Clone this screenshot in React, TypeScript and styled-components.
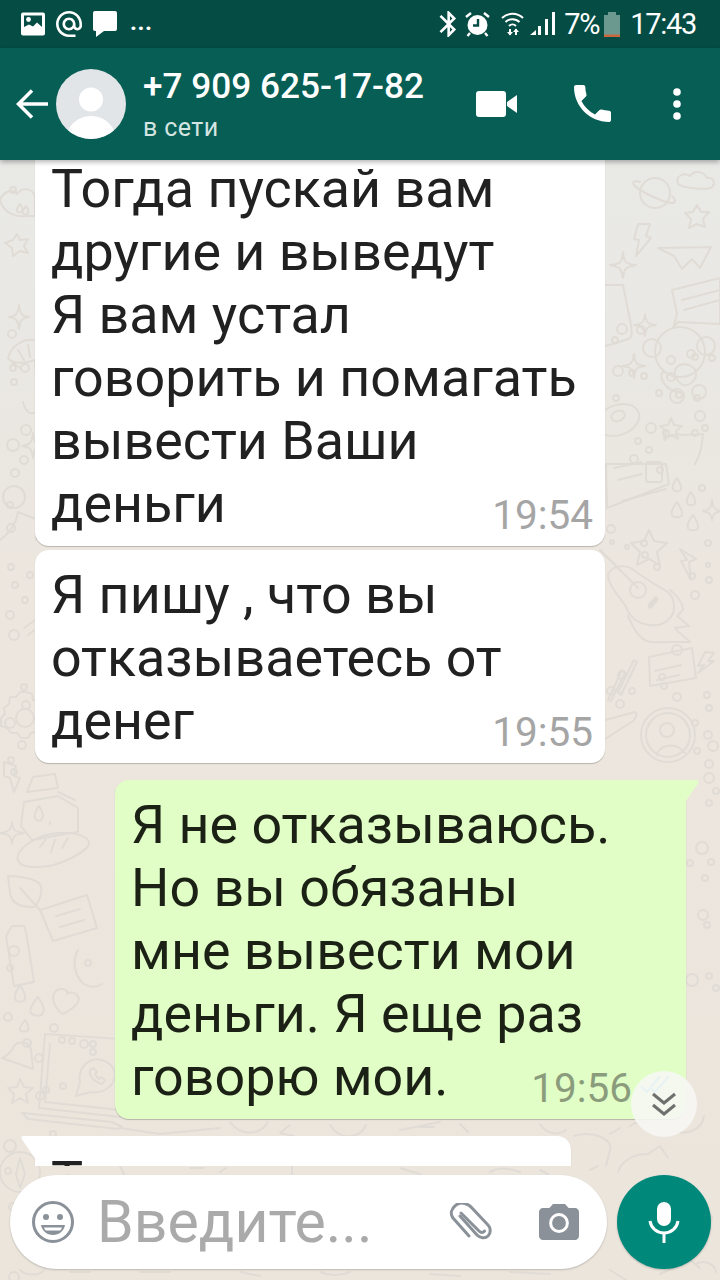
import styled, { createGlobalStyle } from "styled-components";

const GlobalStyle = createGlobalStyle`
    html, body {
        margin: 0;
        padding: 0;
        background: #ece5dd;
    }
    * {
        box-sizing: border-box;
    }
`;

const Page = styled.div`
    width: 720px;
    height: 1280px;
    overflow: hidden;
    display: flex;
    flex-direction: column;
    font-family: Roboto, "Liberation Sans", sans-serif;
`;

const StatusBar = styled.div`
    height: 48px;
    flex: none;
    display: flex;
    align-items: center;
    padding: 0 24px 0 21px;
    background: #054d44;
    color: #fff;
`;

const StatusLeft = styled.div`
    display: flex;
    align-items: center;
    gap: 11px;
    flex: 1;
`;

const StatusDots = styled.span`
    font-size: 24px;
    line-height: 26px;
    margin: 0 0 0 2px;
    letter-spacing: 0.5px;
    font-weight: 700;
    align-self: flex-end;
    padding-bottom: 4px;
`;

const StatusRight = styled.div`
    display: flex;
    align-items: center;
`;

const StatusText = styled.span<{ $gap: number }>`
    font-size: 29px;
    line-height: 48px;
    margin-left: ${(p) => p.$gap}px;
    letter-spacing: -1.3px;
`;

const Header = styled.header`
    position: relative;
    z-index: 2;
    height: 112px;
    flex: none;
    display: flex;
    align-items: center;
    padding-left: 16px;
    background: #075e54;
    color: #fff;
    box-shadow: 0 2px 5px rgba(0, 0, 0, 0.3);
`;

const Avatar = styled.div`
    width: 70px;
    height: 70px;
    margin-left: 8px;
    flex: none;
    border-radius: 50%;
    overflow: hidden;
`;

const Contact = styled.div`
    flex: 1;
    margin-left: 17px;
`;

const ContactName = styled.div`
    font-size: 35.2px;
    line-height: 42px;
    font-weight: 500;
    white-space: nowrap;
`;

const ContactStatus = styled.div`
    font-size: 25px;
    line-height: 32px;
    margin-top: 5px;
    color: #d4e5e2;
    letter-spacing: 0.4px;
`;

const HeaderActions = styled.div`
    display: flex;
    align-items: center;
    padding-right: 39px;
`;

const Chat = styled.main`
    position: relative;
    flex: 1;
    display: flex;
    flex-direction: column;
    background: linear-gradient(#e9e9e6 0, #e9e8e4 180px, #ece6de 420px, #ebe5dc 100%);
`;

const DoodleLayer = styled.svg`
    position: absolute;
    left: 0;
    top: 0;
    width: 720px;
    height: 1120px;
    fill: none;
    stroke: #e0dcd5;
    stroke-width: 2;
    stroke-linejoin: round;
    stroke-linecap: round;
`;

const MessageList = styled.div`
    position: relative;
    height: 1006px;
    flex: none;
    overflow: hidden;
    display: flex;
    flex-direction: column;
`;

const Bubble = styled.div<{ $out?: boolean; $tail?: boolean; $gap?: number }>`
    position: relative;
    flex: none;
    width: ${(p) => (p.$out ? 571 : 570)}px;
    margin-top: ${(p) => p.$gap ?? 0}px;
    margin-left: ${(p) => (p.$out ? 115 : 35)}px;
    padding: 13px 12px 11px 16px;
    background: ${(p) => (p.$out ? "#e1fec6" : "#fff")};
    color: ${(p) => (p.$out ? "#1c2116" : "#212121")};
    font-size: 53.8px;
    line-height: 63px;
    white-space: pre;
    border-radius: 14px;
    box-shadow: 0 1px 1px rgba(0, 0, 0, 0.22);
    ${(p) =>
        p.$tail &&
        (p.$out
            ? "border-top-right-radius: 0;"
            : "border-top-left-radius: 0; width: 536px;")}

    &::after {
        content: ${(p) => (p.$tail ? '""' : "none")};
        position: absolute;
        top: 0;
        width: 16px;
        height: 24px;
        background: inherit;
        ${(p) =>
            p.$out
                ? "right: -14px; clip-path: polygon(0 0, 82% 0, 92% 4%, 88% 14%, 0 100%);"
                : "left: -15px; clip-path: polygon(100% 0, 18% 0, 8% 4%, 12% 14%, 100% 100%);"}
    }
`;

const LastLine = styled.div`
    display: flex;
    justify-content: space-between;
    align-items: flex-end;
    height: 63px;
`;

const Meta = styled.div<{ $out?: boolean }>`
    display: flex;
    align-items: center;
    flex: none;
    margin-bottom: -4px;
    font-size: 40.5px;
    line-height: 48px;
    color: ${(p) => (p.$out ? "#8b9c7d" : "#a5a5a5")};
`;

const Ticks = styled.svg`
    margin: 0 4px 8px 8px;
`;

const ScrollButton = styled.div`
    position: absolute;
    left: 631px;
    top: 911px;
    width: 66px;
    height: 66px;
    display: flex;
    align-items: center;
    justify-content: center;
    border-radius: 50%;
    background: rgba(247, 247, 245, 0.88);
`;

const Composer = styled.div`
    position: relative;
    flex: 1;
    display: flex;
    align-items: flex-start;
    padding: 9px 9px 0 10px;
`;

const InputPill = styled.div`
    width: 597px;
    height: 94px;
    display: flex;
    align-items: center;
    padding: 0 28px 0 22px;
    background: #fff;
    border-radius: 47px;
    box-shadow: 0 1px 2px rgba(0, 0, 0, 0.2);
`;

const Placeholder = styled.div`
    flex: 1;
    margin-left: 23px;
    font-size: 59px;
    line-height: 94px;
    color: #aaaaaa;
    white-space: nowrap;
`;

const MicButton = styled.div`
    width: 94px;
    height: 94px;
    margin-left: 10px;
    display: flex;
    align-items: center;
    justify-content: center;
    border-radius: 50%;
    background: #00897b;
    box-shadow: 0 1px 2px rgba(0, 0, 0, 0.2);
`;

const ImageIcon = () => (
    <svg width="24" height="24" viewBox="0 0 24 24">
        <rect width="24" height="23" y="0.5" rx="2" fill="#fff" />
        <rect x="3" y="3.5" width="18" height="12" fill="#054d44" />
        <circle cx="7.5" cy="7.5" r="2.4" fill="#fff" />
        <path d="M3 19v-4l5-2.5 4 2 4-4 5 4.5v4z" fill="#fff" />
    </svg>
);

const AtIcon = () => (
    <svg width="26" height="26" viewBox="2 2 20 20" fill="#fff">
        <path d="M12 2C6.48 2 2 6.48 2 12s4.48 10 10 10h5v-2h-5c-4.34 0-8-3.66-8-8s3.66-8 8-8 8 3.66 8 8v1.43c0 .79-.71 1.57-1.5 1.57s-1.5-.78-1.5-1.57V12c0-2.76-2.24-5-5-5s-5 2.24-5 5 2.24 5 5 5c1.38 0 2.64-.56 3.54-1.47.65.89 1.77 1.47 2.96 1.47 1.97 0 3.5-1.6 3.5-3.57V12c0-5.52-4.48-10-10-10zm0 13c-1.66 0-3-1.34-3-3s1.34-3 3-3 3 1.34 3 3-1.34 3-3 3z" />
    </svg>
);

const ChatIcon = () => (
    <svg width="24" height="26" viewBox="0 0 24 26" fill="#fff">
        <path d="M2 0h20a2 2 0 0 1 2 2v16a2 2 0 0 1-2 2H11l-8 6v-6H2a2 2 0 0 1-2-2V2a2 2 0 0 1 2-2z" />
    </svg>
);

const BluetoothIcon = () => (
    <svg width="18" height="26" viewBox="5 2 13 20" fill="#fff">
        <path d="M17.71 7.71L12 2h-1v7.59L6.41 5 5 6.41 10.59 12 5 17.59 6.41 19 11 14.41V22h1l5.71-5.71-4.3-4.29 4.3-4.29zM13 5.83l1.88 1.88L13 9.59V5.83zm1.88 10.46L13 18.17v-3.76l1.88 1.88z" />
    </svg>
);

const AlarmIcon = () => (
    <svg width="25" height="25" viewBox="0 0 25 25" style={{ marginLeft: 8 }}>
        <circle cx="12.5" cy="13" r="10" fill="#fff" />
        <path d="M13 7v6.5H8" stroke="#054d44" strokeWidth="2.4" fill="none" />
        <path d="M1 5l5-4M24 5l-5-4M5 21l-2.5 3M20 21l2.5 3" stroke="#fff" strokeWidth="2.4" fill="none" />
    </svg>
);

const WifiIcon = () => (
    <svg width="23" height="24" viewBox="0 0 23 24" fill="none" stroke="#fff" strokeWidth="2" style={{ marginLeft: 11 }}>
        <path d="M1 6a15 15 0 0 1 21 0M4.5 10a10 10 0 0 1 14 0M8 14a5 5 0 0 1 7 0" />
        <path d="M9 23v-6M15 17v6" />
        <path d="M6 20l3 3.5 3-3.500zM12 20l3-3.500 3 3.500z" fill="#fff" stroke="none" />
    </svg>
);

const SignalIcon = () => (
    <svg width="25" height="24" viewBox="0 0 25 24" fill="#fff" style={{ marginLeft: 6 }}>
        <path d="M0 23l6-5v5zM8 23v-9h3v9zM15 23V7h3v16zM22 23V0h3v23z" />
    </svg>
);

const BatteryIcon = () => (
    <svg width="16" height="25" viewBox="0 0 16 25" style={{ marginLeft: 5 }}>
        <path d="M0 3h4V0h8v3h4v22H0z" fill="#6b988f" />
        <rect y="22.500" width="16" height="2.500" fill="#c8683f" />
    </svg>
);

const BackIcon = () => (
    <svg width="32" height="30" viewBox="0 0 32 30" fill="none" stroke="#fff" strokeWidth="3.500">
        <path d="M32 15H3M16 1.500L2.500 15 16 28.500" />
    </svg>
);

const AvatarIcon = () => (
    <svg width="70" height="70" viewBox="0 0 70 70">
        <rect width="70" height="70" fill="#e1e5e8" />
        <circle cx="35" cy="30.500" r="12" fill="#fff" />
        <ellipse cx="35" cy="71" rx="25" ry="24" fill="#fff" />
    </svg>
);

const VideoIcon = () => (
    <svg width="41" height="26" viewBox="0 0 41 26" fill="#fff" style={{ marginRight: 57 }}>
        <rect width="30" height="26" rx="3" />
        <path d="M31 11l10-7v18l-10-7z" />
    </svg>
);

const PhoneIcon = () => (
    <svg width="37" height="37" viewBox="3 3 18 18" fill="#fff" style={{ marginRight: 62, marginTop: -2 }}>
        <path d="M6.620 10.790c1.440 2.830 3.760 5.140 6.590 6.590l2.200-2.200c.27-.27.67-.36 1.020-.24 1.120.37 2.330.57 3.570.57.55 0 1 .45 1 1V20c0 .55-.45 1-1 1-9.390 0-17-7.610-17-17 0-.55.45-1 1-1h3.500c.55 0 1 .45 1 1 0 1.250.2 2.450.57 3.570.11.35.03.74-.25 1.020l-2.200 2.200z" />
    </svg>
);

const MoreIcon = () => (
    <svg width="8" height="32" viewBox="0 0 8 32" fill="#fff">
        <circle cx="4" cy="4" r="3.800" />
        <circle cx="4" cy="16" r="3.800" />
        <circle cx="4" cy="28" r="3.800" />
    </svg>
);

const EmojiIcon = () => (
    <svg width="42" height="42" viewBox="0 0 42 42">
        <circle cx="21" cy="21" r="19.500" fill="none" stroke="#8a9198" strokeWidth="3" />
        <circle cx="14" cy="16" r="3" fill="#8a9198" />
        <circle cx="28" cy="16" r="3" fill="#8a9198" />
        <path d="M9 24h24c-1 6-6 10-12 10S10 30 9 24z" fill="#8a9198" />
        <path d="M12 26.500h18c-.5 1.500-1 2.500-2 3H14c-1-.5-1.500-1.500-2-3z" fill="#fff" />
    </svg>
);

const ClipIcon = () => (
    <svg width="44" height="38" viewBox="0 0 44 38" fill="none" stroke="#8a9198" strokeWidth="3" strokeLinecap="round" style={{ marginRight: 46 }}>
        <path d="M11 14L28 33c3 3 8 4 11 1s3-8 0-11L23 6C20 2 12-1 7 3S1 12 4 16l16 18" transform="translate(0 -1)" />
        <path d="M12 10l18 18c2 2 4 2 5.500 0" />
    </svg>
);

const CameraIcon = () => (
    <svg width="40" height="37" viewBox="2 2 20 18.500">
        <path d="M9 2L7.170 4H4c-1.100 0-2 .9-2 2v12c0 1.100.9 2 2 2h16c1.100 0 2-.9 2-2V6c0-1.100-.9-2-2-2h-3.170L15 2H9z" fill="#8a9198" />
        <circle cx="12" cy="11.500" r="4.200" fill="#8a9198" stroke="#fff" strokeWidth="1.500" />
    </svg>
);

const MicIcon = () => (
    <svg width="32" height="41" viewBox="0 0 32 41" fill="none" stroke="#fff" strokeWidth="3">
        <rect x="9" y="0" width="14" height="24" rx="7" fill="#fff" stroke="none" />
        <path d="M2 19c1 7 7 12 14 12s13-5 14-12M16 31v10" />
    </svg>
);

const ChevronsIcon = () => (
    <svg width="26" height="24" viewBox="0 0 26 24" fill="none" stroke="#6f6f6d" strokeWidth="3">
        <path d="M2 2l11 9 11-9M2 13l11 9 11-9" />
    </svg>
);

const circles: [number, number, number][] = [
    [622, 169, 5], [641, 170, 4], [615, 180, 3], [618, 211, 5], [632, 213, 3], [644, 216, 3], [671, 217, 4], [712, 198, 3], [695, 197, 3],
    [616, 238, 3], [659, 233, 3], [679, 235, 3], [697, 238, 3], [700, 256, 5], [651, 268, 5], [666, 273, 3], [695, 273, 3], [705, 268, 3],
    [638, 281, 3], [649, 290, 3], [634, 299, 4], [660, 310, 3], [702, 328, 3], [611, 369, 4], [612, 382, 2], [644, 383, 3], [627, 387, 2],
    [645, 395, 3], [657, 407, 3], [708, 383, 3], [692, 416, 3], [709, 420, 3], [708, 405, 2], [695, 435, 4],
    [622, 515, 4], [632, 531, 3], [611, 531, 4], [620, 544, 4], [677, 490, 5], [662, 517, 3], [664, 526, 3], [677, 537, 4], [707, 535, 3], [709, 548, 3],
    [695, 563, 3], [708, 575, 4], [713, 586, 5], [697, 591, 3], [709, 604, 4], [709, 618, 5], [716, 631, 3], [709, 643, 3], [617, 642, 3], [623, 637, 3], [635, 643, 4],
    [639, 689, 3], [702, 688, 6], [678, 699, 4], [690, 703, 3], [711, 702, 3], [705, 718, 3], [626, 742, 3], [620, 755, 3], [633, 758, 3], [703, 755, 5], [644, 767, 3], [620, 771, 5],
    [707, 765, 3], [692, 820, 6], [709, 816, 3], [716, 828, 3],
    [690, 1040, 6], [703, 1063, 3], [709, 1058, 3], [681, 1034, 3], [706, 1066, 4],
    [13, 30, 3], [12, 174, 4], [13, 208, 3], [25, 208, 4], [14, 222, 3], [26, 270, 5], [13, 285, 6], [24, 300, 4], [15, 313, 4], [10, 345, 3],
    [11, 368, 4], [11, 407, 3], [30, 415, 3], [15, 425, 3], [25, 440, 3], [10, 455, 4], [14, 475, 5], [24, 527, 3], [26, 545, 4], [10, 563, 5], [22, 585, 4], [11, 600, 3], [14, 612, 3],
    [14, 791, 5], [10, 808, 3], [88, 803, 3], [8, 857, 4], [54, 868, 4], [62, 880, 3], [72, 881, 3], [84, 884, 4], [93, 884, 3], [93, 892, 3], [39, 898, 4], [40, 936, 4],
    [46, 930, 3], [63, 926, 3], [53, 974, 3], [70, 986, 3], [68, 1019, 4], [13, 1047, 4], [20, 1064, 4], [8, 1011, 3], [14, 1117, 5],
];

const Doodles = () => (
    <DoodleLayer viewBox="0 160 720 1120">
        {circles.map(([cx, cy, r], i) => (
            <circle key={i} cx={cx} cy={cy + 160} r={r} />
        ))}

        {/* planet, cloud */}
        <circle cx="655" cy="193" r="15" />
        <path d="M640 182c-6-2-8 0-6 3 5 6 30 18 38 18 4 0 4-4 0-7" />
        <path d="M678 184c-3-8 6-12 12-8 4-6 14-5 17 2 6-1 9 5 5 9-3 3-28 2-34-3z" />
        <path d="M0 200c3-8 12-12 17-6 5-7 15-6 18 2v20l-7 0c-8 1-24 0-28-16z" />
        {/* stars */}
        <path d="M697 205l4 7 8 0-6 7 2 8-8-3-8 4 2-9-6-6 8-1z" />
        <path d="M17 234l3 6 8-1-4 7 4 7-8-2-7 5-1-8-7-5 8-3z" />
        <path d="M671 418l3 7 8 1-6 5 2 8-7-4-7 4 2-8-6-5 8-1z" />
        <path d="M649 530l5 11 13 2-10 9 3 13-11-6-12 6 3-13-9-9 13-2z" />
        <path d="M12 1070l4 8 9 1-7 6 2 9-8-5-8 5 2-9-6-6 9-1z" transform="translate(8 9)" />
        {/* sparkles */}
        <path d="M623 252c1 10 2 12 13 13-10 2-12 3-13 13-2-10-3-11-13-13 11-1 12-3 13-13z" />
        <path d="M645 314c1 8 2 10 11 11-9 1-10 3-11 11-1-8-3-10-11-11 9-1 10-3 11-11z" />
        <path d="M634 354c1 9 2 11 11 12-9 1-10 3-11 12-1-9-3-11-12-12 9-1 11-3 12-12z" />
        <path d="M712 500c1 8 3 10 9 11-6 1-8 3-9 9-1-6-3-8-9-9 6-1 8-3 9-9z" />
        <path d="M19 305c1 9 3 11 10 12-7 1-9 3-10 12-1-9-3-11-10-12 7-1 9-3 10-12z" />
        <path d="M33 433c1 9 2 12 10 13-8 1-9 3-10 12-1-9-3-11-11-12 8-1 10-4 11-13z" />
        <path d="M12 822c1 8 2 10 12 11-10 1-11 3-12 11-1-8-3-10-12-11 9-1 11-3 12-11z" />
        {/* bolts */}
        <path d="M638 224l12 0-4 12 5 2-15 18 3-16-5-1z" />
        <path d="M680 549l16 10-7 3 2 18-10-19 6-1z" />
        <path d="M705 652l-7 14 6-1-6 8 16-12-6 0 6-8z" />
        <path d="M4 762l12 4-2 10 6 2-6 14-4-14-6-2z" />
        {/* paper plane, cards */}
        <path d="M658 248l53-1-11 21-8-9-10 10-8-13z" />
        <path d="M672 290l48-12v46l-42-2-5 6 4-14z" />
        <path d="M682 300l38-10M684 310l36-10" />
        <path d="M649 657l43-9 4 30-46 8z" />
        <path d="M655 671l26-6M657 680l22-5" />
        <path d="M606 464l60 0 3 20-62 24z" />
        <path d="M614 468l28-6M618 480l24-6M622 501l44-12" />
        <rect x="646" y="462" width="16" height="20" rx="2" />
        <path d="M40 910l47-15 10 33-44 13z" />
        <path d="M56 916l24-7M60 927l24-7" />
        {/* monkey */}
        <circle cx="680" cy="352" r="25" />
        <circle cx="652" cy="348" r="9" />
        <circle cx="706" cy="346" r="9" />
        <circle cx="671" cy="360" r="4" />
        <circle cx="691" cy="354" r="4" />
        <path d="M676 368c8-8 20-2 20 6s-10 14-15 10-8-10-5-16zM665 372c-8 0-3 16 12 20" />
        <circle cx="677" cy="396" r="7" />
        <circle cx="699" cy="392" r="7" />
        {/* cup, donut */}
        <path d="M605 285h18l8 40c1 8 2 12-3 14-8 3-14 5-23 7" />
        <ellipse cx="618" cy="420" rx="22" ry="15" transform="rotate(-20 618 420)" />
        <ellipse cx="618" cy="416" rx="7" ry="5" transform="rotate(-20 618 416)" />
        <path d="M665 440c3-6 12-6 20-5l18-1c-1 10-2 20-8 30" />
        {/* drops */}
        <path d="M677 478c3 5 5 8 4 11s-7 3-8 0 1-7 4-11zM691 492c3 5 5 8 4 11s-7 3-8 0 1-7 4-11zM677 502c4 6 6 10 5 13s-9 3-10 0 1-8 5-13zM693 515c4 6 6 10 5 13s-9 3-10 0 1-8 5-13z" />
        <path d="M20 985c4 6 6 10 5 14s-9 3-10 0 1-8 5-14zM38 997c5 7 7 12 5 16s-10 3-12 0 2-10 7-16zM25 1020c3 4 4 8 3 10s-7 2-8 0 2-6 5-10z" />
        <path d="M20 204c2 3 3 5 2 7s-4 2-5 0 1-4 3-7zM26 206c2 3 3 5 2 7s-4 2-5 0 1-4 3-7z" />
        {/* guitar */}
        <path d="M600 550l38 38" />
        <circle cx="638" cy="590" r="8" />
        <path d="M608 574c6-10 20-10 28-2l20 13c10 6 17 8 18 20 1 14-12 22-24 20-14-2-20-8-24-18-4-8-18-20-18-33z" />
        <path d="M650 606l6-7" strokeWidth="5" />
        <path d="M670 590c8 6 13 12 13 20l-6 6 12 10-14 2c4 6 10 8 15 14l-22 0c-10 0-20 2-26-4-8-6-10-14-14-22" />
        {/* avatar */}
        <circle cx="668" cy="735" r="27" />
        <circle cx="668" cy="735" r="22" />
        <circle cx="667" cy="730" r="7" />
        <path d="M657 755c2-10 18-14 28-2" />
        {/* pens, rocket */}
        <path d="M608 700l14-30 3 3-14 28zM618 692l16-32 3 2-16 33z" />
        <path d="M605 720l30-8c3 1 1 6-2 9l-28 18" />
        {/* person, shell */}
        <circle cx="14" cy="497" r="11" />
        <path d="M0 540c6-4 16-14 18-28l20 8-2 20" />
        <path d="M35 340c-12-2-24 6-27 18 4 6 16 6 27 2l2 52c-8 4-12-2-14-10" />
        <path d="M12 362l8 6M18 350l6 10M28 345l2 12" />
        {/* gear, pencil */}
        <path d="M26 692l6 2 1 6 6 2 0 8 6 3-1 8-6 3 0 7-7 2-3 5-7 0-4-5-6 0-4-5-6-2 0-8 4-4-1-6 5-4 1-7 6 0 4-5z" />
        <circle cx="25" cy="718" r="9" />
        <path d="M24 628l14-10M28 635l8-6" />
        {/* milk box */}
        <path d="M24 798l34-6 20 12 0 24-46 8-11-14z" transform="translate(0 4)" />
        <path d="M33 777l22-3 3 14-31 4zM58 792l17 8M50 822v2" />
        <path d="M39 806c4 6 5 10 3 13s-6 2-7-1 1-8 4-12z" />
        {/* bread, leaf */}
        <path d="M18 855c4-10 20-20 40-22 14-1 30 2 31 10 0 8-30 24-50 24-10 0-24 0-21-12z" />
        <path d="M40 847l6-8M55 840l-4 12M68 838l-6 10" />
        <path d="M8 876c10 0 26 2 32 8 4 8-2 20-6 23-12 0-22-2-24-14zM20 888l20 22" />
        {/* bottle, snake, heart */}
        <path d="M12 926h12l2 6 8 50-20 4-8-50z" />
        <path d="M78 950c-6 10-4 26 6 34 6 4 14 3 18 0" />
        <path d="M55 992c5-6 15-2 12 2 6-4 14 2 11 8-3 5-11 10-15 12-5-3-14-14-8-22z" />
        {/* bell, laptop, whatsapp */}
        <path d="M14 1046c5-6 16-4 17 4l2 19-31-11c6-2 9-6 12-12z" />
        <circle cx="27" cy="1043" r="4" />
        <path d="M45 1034l75 5M45 1034l-6 74 81 9M50 1044l-5 58 75 8" />
        <path d="M22 1113l90 9 10 5-4 2-90-10-6-6z" />
        <path d="M76 1096l4-14c-2-8 2-18 12-22 10-3 22 4 23 14 0 12-12 20-24 18z" />
        <path d="M90 1070c-1 6 4 12 12 14l3-4-4-3-2 2c-2-1-3-3-4-5l2-2-3-4z" />
        {/* compass */}
        <circle cx="20" cy="1172" r="20" />
        <circle cx="10" cy="1146" r="6" />
        <path d="M20 1158l5 16-5 14-4-14z" />
        {/* scraps between bubbles */}
        <path d="M120 1128l40 6 60-6M230 1122c10 14 30 14 38 0M290 1125l-10 8 14 3M330 1125c10 16 30 14 36 0" />
        <path d="M400 1130l40-8M420 1127h14M460 1124l8 8M540 1124c6 10 18 12 26 6" />
        <path d="M630 1126c14-10 34 0 34 10M610 1134l10-6" />
        <path d="M120 1166l4 8M190 1168h14M220 1172l6-4M292 1166v8M400 1168l20 6M490 1172c10-6 20-4 30 0M540 1170l8 4M590 1170l8-4" />
        {/* blobs right of the composer */}
        <path d="M574 1136c20-6 40 4 36 14l-4 16" />
        <path d="M618 1172c4-12 16-18 30-18l12-8 8 12" />
        <path d="M660 1116c-2 8 6 14 18 16 10 2 24-2 26-16" />
        <path d="M660 1274l30-14 10 8M610 1270l16 10M696 1264c6-4 18-2 20 8" />
        <path d="M20 1270c6 6 20 6 24 0M70 1272h20M140 1272h30M240 1272l20 4M320 1272c10 4 20 4 30 0M430 1274l30 2M510 1272l40 2" />
    </DoodleLayer>
);

export default function App() {
    return (
        <Page>
            <GlobalStyle />
            <StatusBar>
                <StatusLeft>
                    <ImageIcon />
                    <AtIcon />
                    <ChatIcon />
                    <StatusDots>...</StatusDots>
                </StatusLeft>
                <StatusRight>
                    <BluetoothIcon />
                    <AlarmIcon />
                    <WifiIcon />
                    <SignalIcon />
                    <StatusText $gap={9}>7%</StatusText>
                    <BatteryIcon />
                    <StatusText $gap={10}>17:43</StatusText>
                </StatusRight>
            </StatusBar>
            <Header>
                <BackIcon />
                <Avatar>
                    <AvatarIcon />
                </Avatar>
                <Contact>
                    <ContactName>+7 909 625-17-82</ContactName>
                    <ContactStatus>в сети</ContactStatus>
                </Contact>
                <HeaderActions>
                    <VideoIcon />
                    <PhoneIcon />
                    <MoreIcon />
                </HeaderActions>
            </Header>
            <Chat>
                <Doodles />
                <MessageList>
                    <Bubble $gap={-16}>
                        {"Тогда пускай вам\nдругие и выведут\nЯ вам устал\nговорить и помагать\nвывести Ваши"}
                        <LastLine>
                            <span>деньги</span>
                            <Meta>19:54</Meta>
                        </LastLine>
                    </Bubble>
                    <Bubble $gap={4}>
                        {"Я пишу , что вы\nотказываетесь от"}
                        <LastLine>
                            <span>денег</span>
                            <Meta>19:55</Meta>
                        </LastLine>
                    </Bubble>
                    <Bubble $out $tail $gap={17}>
                        {"Я не отказываюсь.\nНо вы обязаны\nмне вывести мои\nденьги. Я еще раз"}
                        <LastLine>
                            <span>говорю мои.</span>
                            <Meta $out>
                                19:56
                                <Ticks width="30" height="20" viewBox="0 0 30 20" fill="none" stroke="#7cc8ee" strokeWidth="2">
                                    <path d="M1 12l6 6L20 2M12 15l3 3L29 2" />
                                </Ticks>
                            </Meta>
                        </LastLine>
                    </Bubble>
                    <Bubble $tail $gap={17}>
                        Т
                    </Bubble>
                    <ScrollButton>
                        <ChevronsIcon />
                    </ScrollButton>
                </MessageList>
                <Composer>
                    <InputPill>
                        <EmojiIcon />
                        <Placeholder>Введите...</Placeholder>
                        <ClipIcon />
                        <CameraIcon />
                    </InputPill>
                    <MicButton>
                        <MicIcon />
                    </MicButton>
                </Composer>
            </Chat>
        </Page>
    );
}
